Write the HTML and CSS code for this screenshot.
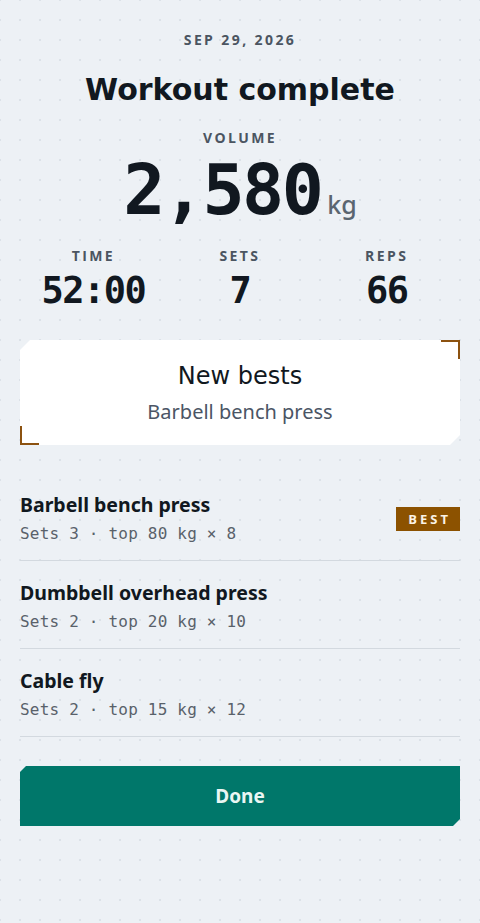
FILE: index.html
```html
<!DOCTYPE html>
<html lang="en">
<head>
  <meta charset="UTF-8" />
  <meta name="viewport" content="width=device-width, initial-scale=1.0"/>
  <title>Workout complete</title>
  <link rel="stylesheet" href="styles.css">
</head>
<body>
  <main class="screen">
    <p class="date">SEP 29, 2026</p>
    <h1 class="title">Workout complete</h1>

    <p class="label">VOLUME</p>
    <div class="volume">2,580<span class="unit">kg</span></div>

    <div class="stats">
      <div class="stat">
        <p class="label">TIME</p>
        <div class="stat-value">52:00</div>
      </div>
      <div class="stat">
        <p class="label">SETS</p>
        <div class="stat-value">7</div>
      </div>
      <div class="stat">
        <p class="label">REPS</p>
        <div class="stat-value">66</div>
      </div>
    </div>

    <section class="bests">
      <h2>New bests</h2>
      <p>Barbell bench press</p>
    </section>

    <ul class="exercises">
      <li class="exercise">
        <div>
          <h3>Barbell bench press</h3>
          <p class="detail">Sets 3 · top 80 kg × 8</p>
        </div>
        <span class="badge">BEST</span>
      </li>
      <li class="exercise">
        <div>
          <h3>Dumbbell overhead press</h3>
          <p class="detail">Sets 2 · top 20 kg × 10</p>
        </div>
      </li>
      <li class="exercise">
        <div>
          <h3>Cable fly</h3>
          <p class="detail">Sets 2 · top 15 kg × 12</p>
        </div>
      </li>
    </ul>

    <button class="done">Done</button>
  </main>
</body>
</html>
```

FILE: styles.css
```css
body {
  margin: 0;
  background-color: #edf1f5;
  background-image: radial-gradient(circle, #dce2e8 1px, transparent 1.2px);
  background-size: 20px 20px;
  background-position: 10px 10px;
  font-family: 'Open Sans', sans-serif;
  color: #111820;
  min-height: 923px;
}

.screen {
  padding: 32px 20px 0;
  text-align: center;
}

p, h1, h2, h3 {
  margin: 0;
}

.date,
.label {
  font-size: 14px;
  line-height: 16px;
  font-weight: 700;
  letter-spacing: 2.4px;
  color: #4b5561;
}

.title {
  margin-top: 22px;
  font-family: 'DejaVu Sans', sans-serif;
  font-size: 30px;
  line-height: 40px;
  font-weight: 700;
  color: #111820;
}

.screen > .label {
  margin-top: 20px;
}

.volume {
  margin-top: 14px;
  font-family: 'DejaVu Sans Mono', monospace;
  font-weight: 700;
  font-size: 70px;
  line-height: 60px;
  letter-spacing: -2.5px;
  color: #111820;
}

.unit {
  font-family: 'Noto Sans', sans-serif;
  font-size: 25px;
  line-height: 0;
  font-weight: 500;
  letter-spacing: 0;
  color: #5a6570;
  margin-left: 6px;
}

.stats {
  display: grid;
  grid-template-columns: repeat(3, 1fr);
  margin-top: 28px;
}

.stat-value {
  margin-top: 7px;
  font-family: 'DejaVu Sans Mono', monospace;
  font-weight: 700;
  font-size: 37px;
  line-height: 40px;
  letter-spacing: -1.5px;
  color: #111820;
}

.bests {
  position: relative;
  margin-top: 29px;
  height: 105px;
  box-sizing: border-box;
  padding-top: 20px;
  background: #fff;
  clip-path: polygon(10px 0, 100% 0, 100% calc(100% - 10px), calc(100% - 10px) 100%, 0 100%, 0 10px);
}

.bests::before,
.bests::after {
  content: "";
  position: absolute;
  width: 17px;
  height: 17px;
  border: 0 solid #8c5210;
}

.bests::before {
  top: 0;
  right: 0;
  border-top-width: 2px;
  border-right-width: 2px;
}

.bests::after {
  bottom: 0;
  left: 0;
  border-bottom-width: 2px;
  border-left-width: 2px;
}

.bests h2 {
  font-family: 'DejaVu Sans', sans-serif;
  font-size: 24px;
  line-height: 32px;
  font-weight: 400;
  color: #111820;
}

.bests p {
  margin-top: 8px;
  font-family: 'Noto Sans', sans-serif;
  font-size: 20px;
  line-height: 24px;
  color: #4b5565;
}

.exercises {
  list-style: none;
  margin: 28px 0 0;
  padding: 0;
  text-align: left;
}

.exercise {
  display: flex;
  justify-content: space-between;
  align-items: center;
  padding: 19px 0 15px;
  border-bottom: 1px solid #d3d9df;
}

.exercise h3 {
  font-family: 'Noto Sans', sans-serif;
  font-size: 19.5px;
  line-height: 26px;
  font-weight: 700;
  color: #111820;
}

.detail {
  margin-top: 5px;
  font-family: 'DejaVu Sans Mono', monospace;
  font-size: 16px;
  line-height: 22px;
  letter-spacing: 0.2px;
  color: #59616a;
}

.badge {
  background: #8c5200;
  color: #fbf3e6;
  font-size: 13px;
  font-weight: 700;
  letter-spacing: 3px;
  line-height: 24px;
  padding: 0 9px 0 12px;
}

.done {
  display: block;
  width: 100%;
  height: 60px;
  margin-top: 29px;
  border: none;
  background: #00776a;
  color: #eaf6f3;
  font-family: 'Noto Sans', sans-serif;
  font-size: 19px;
  font-weight: 700;
  cursor: pointer;
  clip-path: polygon(6px 0, 100% 0, 100% calc(100% - 7px), calc(100% - 7px) 100%, 0 100%, 0 6px);
}
```
